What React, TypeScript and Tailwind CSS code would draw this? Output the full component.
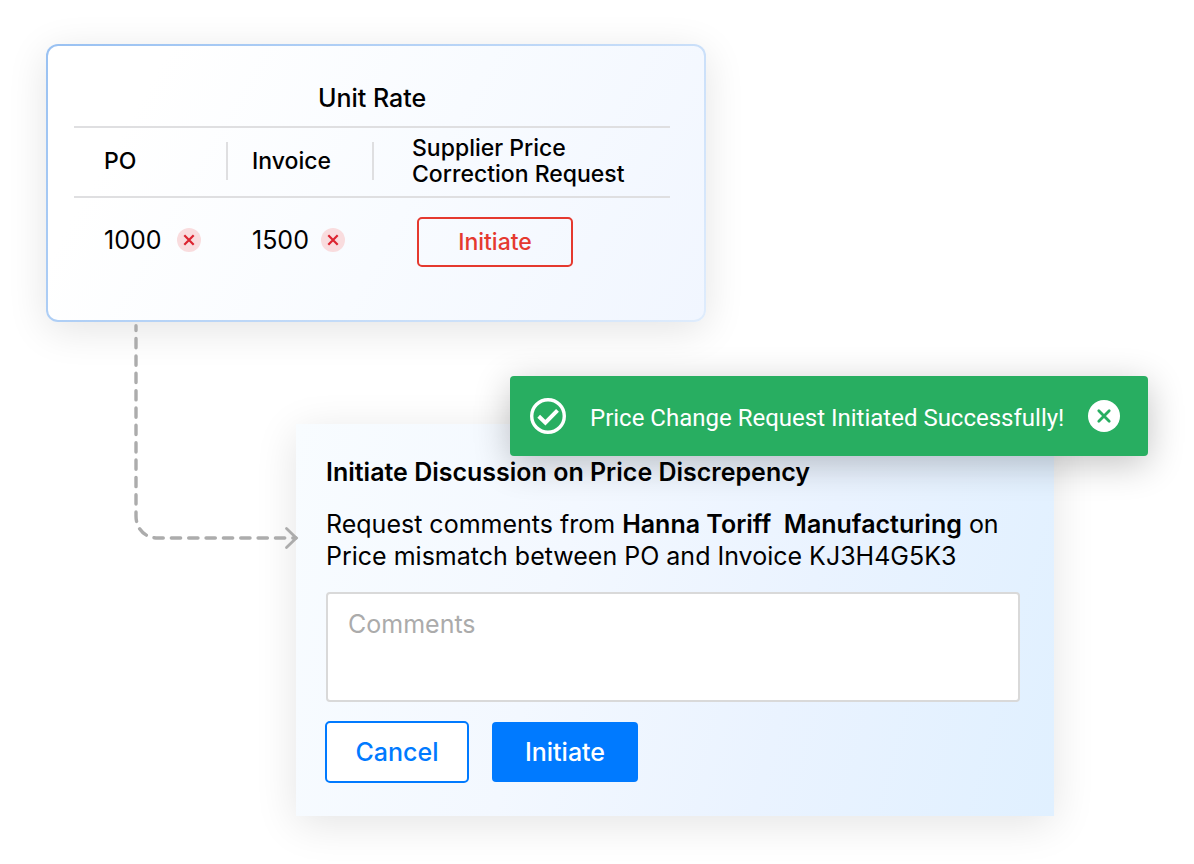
import React from "react";

function MismatchBadge() {
  return (
    <span
      role="img"
      aria-label="Mismatch"
      className="inline-flex size-6 shrink-0 items-center justify-center rounded-full bg-[#f9dcde]"
    >
      <svg viewBox="0 0 24 24" className="size-6" fill="none" stroke="#dc2430" strokeWidth="2.2">
        <path d="M7.3 7.3l9.4 9.4M16.7 7.3l-9.4 9.4" />
      </svg>
    </span>
  );
}

function Connector() {
  return (
    <svg
      aria-hidden="true"
      className="pointer-events-none absolute top-[280px] left-[80px] z-10"
      width="180"
      height="240"
      viewBox="0 0 180 240"
      fill="none"
      stroke="#acacac"
      strokeWidth="3.4"
      strokeLinecap="round"
    >
      <path
        d="M10 1.7V192C10 204 18 214 32 214H170"
        strokeDasharray="9.3 8.05"
        strokeDashoffset="4.5"
      />
      <path d="M160.5 204.5L170.3 214L160.5 223.5" strokeWidth="2.8" strokeLinejoin="miter" />
    </svg>
  );
}

function UnitRateCard() {
  return (
    <section className="w-full max-w-[660px] rounded-xl border-2 border-transparent pr-[34px] pb-[53px] pl-[26px] shadow-[0_8px_40px_rgba(0,0,0,0.11)] [background:linear-gradient(120deg,#ffffff_15%,#f8fbff_55%,#f1f6ff)_padding-box,linear-gradient(135deg,#99c1f2,#dfecfc)_border-box]">
      <table className="w-full table-fixed border-separate border-spacing-0 text-left">
        <colgroup>
          <col className="w-[154px]" />
          <col className="w-[146px]" />
          <col />
        </colgroup>
        <thead>
          <tr>
            <th
              colSpan={3}
              className="border-b-2 border-[#dfdfe1] pt-9 pb-3 text-center text-[25px] leading-8 font-medium"
            >
              Unit Rate
            </th>
          </tr>
          <tr className="text-[23px] leading-[26px]">
            <th className="border-b-2 border-[#dfdfe1] p-0 pb-0.5 font-medium">
              <div className="flex h-[38px] items-center border-r-2 border-[#dfdfe1] pl-[30px]">PO</div>
            </th>
            <th className="border-b-2 border-[#dfdfe1] p-0 pb-0.5 font-medium">
              <div className="flex h-[38px] items-center border-r-2 border-[#dfdfe1] pl-6">Invoice</div>
            </th>
            <th className="border-b-2 border-[#dfdfe1] pt-[7px] pb-[9px] pl-[38px] font-medium">
              Supplier Price
              <br />
              Correction Request
            </th>
          </tr>
        </thead>
        <tbody>
          <tr className="text-[25px] leading-8">
            <td className="pt-[19px] pb-1 pl-[30px]">
              <div className="flex items-center gap-4">
                1000 <MismatchBadge />
              </div>
            </td>
            <td className="pt-[19px] pb-1 pl-6">
              <div className="flex items-center gap-3">
                1500 <MismatchBadge />
              </div>
            </td>
            <td className="pt-[19px] pl-[43px]">
              <button
                type="button"
                className="flex h-[50px] w-[156px] items-center justify-center rounded-[5px] border-2 border-[#e5392f] text-[23px] font-medium text-[#e5392f]"
              >
                Initiate
              </button>
            </td>
          </tr>
        </tbody>
      </table>
    </section>
  );
}

function Toast() {
  return (
    <div
      role="status"
      className="absolute -top-12 -right-[94px] left-[214px] z-20 flex h-20 items-center rounded bg-[#28ae61] pr-7 pl-5 text-white shadow-[0_8px_36px_rgba(0,0,0,0.24)]"
    >
      <svg viewBox="0 0 36 36" className="size-9 shrink-0" fill="none" stroke="white" aria-hidden="true">
        <circle cx="18" cy="18" r="16.3" strokeWidth="3.4" />
        <path d="M8.7 18.3L15.4 24.6L27.5 12.4" strokeWidth="4" />
      </svg>
      <p className="ml-6 flex-1 pt-1 font-['Roboto',sans-serif] text-2xl whitespace-nowrap">
        Price Change Request Initiated Successfully!
      </p>
      <button
        type="button"
        aria-label="Dismiss"
        className="flex size-8 shrink-0 items-center justify-center rounded-full bg-white"
      >
        <svg viewBox="0 0 32 32" className="size-8" fill="none" stroke="#28ae61" strokeWidth="2.8" strokeLinecap="round">
          <path d="M10.8 10.8l10.4 10.4M21.2 10.8l-10.4 10.4" />
        </svg>
      </button>
    </div>
  );
}

function DiscussionForm() {
  return (
    <div className="relative mt-[102px] ml-[250px] w-full max-w-[758px]">
      <form
        onSubmit={(event) => event.preventDefault()}
        className="bg-[linear-gradient(105deg,#f8fcff,#f3f8ff_35%,#eaf3ff_65%,#e0f0ff)] pt-8 pr-[34px] pb-[33px] pl-[30px] text-[25px] leading-8 shadow-[0_8px_40px_rgba(0,0,0,0.11)]"
      >
        <h2 className="font-semibold">Initiate Discussion on Price Discrepency</h2>
        <p className="mt-5">
          Request comments from <strong className="font-semibold">Hanna Toriff&nbsp; Manufacturing</strong> on
          <br />
          Price mismatch between PO and Invoice KJ3H4G5K3
        </p>
        <textarea
          aria-label="Comments"
          placeholder="Comments"
          className="mt-5 block h-[110px] w-full resize-none rounded border-2 border-[#d9d9d9] bg-white px-5 py-[14px] placeholder:text-[#ababab]"
        />
        <div className="mt-[19px] -ml-px flex items-center gap-[23px] font-medium">
          <button
            type="button"
            className="h-[62px] w-36 rounded-[5px] border-2 border-[#007aff] bg-white text-[#007aff]"
          >
            Cancel
          </button>
          <button type="submit" className="h-[60px] w-[146px] rounded bg-[#007aff] text-white">
            Initiate
          </button>
        </div>
      </form>
      <Toast />
    </div>
  );
}

export default function App() {
  return (
    <main className="min-h-screen overflow-hidden bg-white px-[46px] pt-11 pb-12 font-['Inter',sans-serif] text-black">
      <div className="relative">
        <Connector />
        <UnitRateCard />
        <DiscussionForm />
      </div>
    </main>
  );
}
